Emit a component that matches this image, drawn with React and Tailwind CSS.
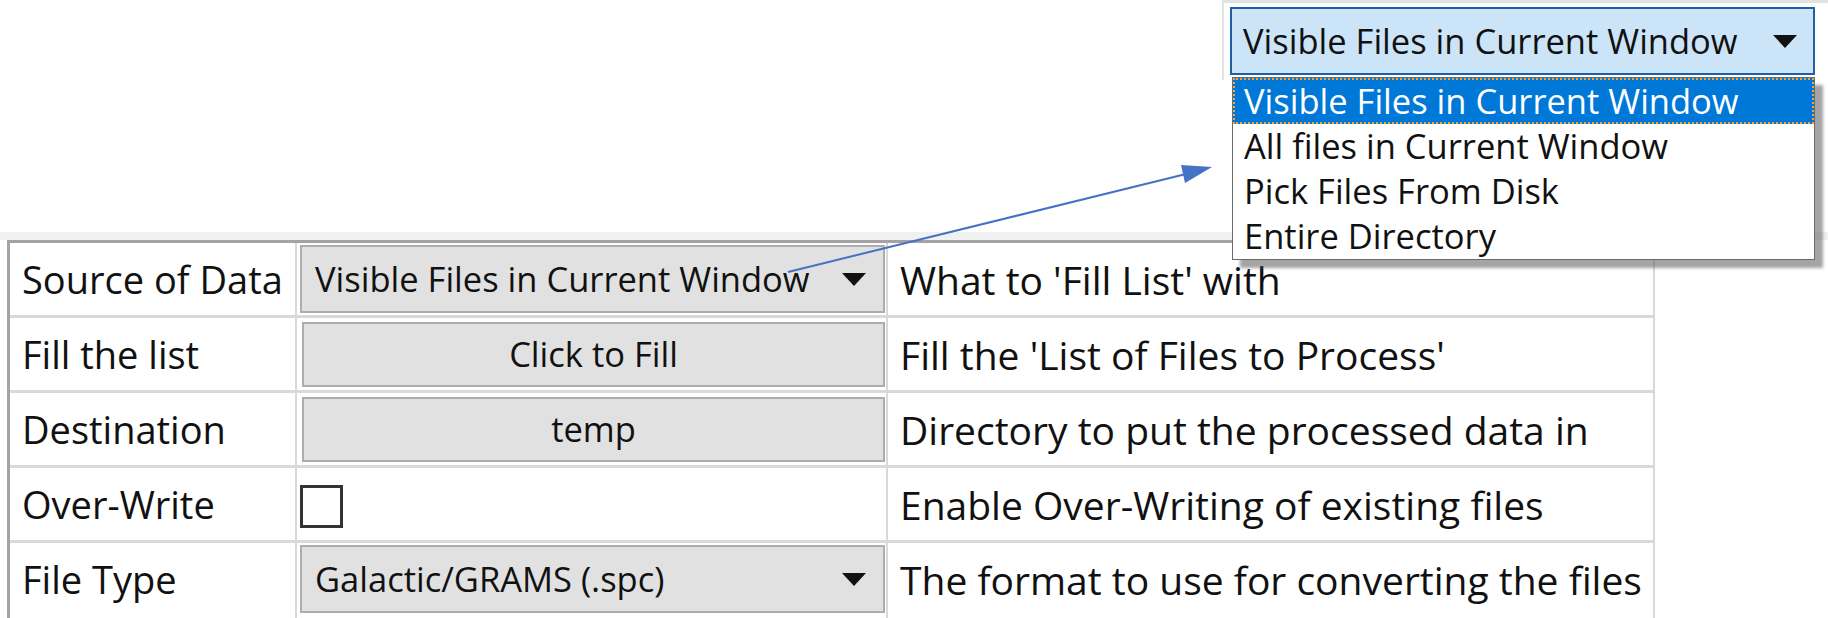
import { Fragment } from 'react'

// rows of the property grid
const ROWS = [
  { label: 'Source of Data', kind: 'select', value: 'Visible Files in Current Window', desc: "What to 'Fill List' with" },
  { label: 'Fill the list',  kind: 'button', value: 'Click to Fill', desc: "Fill the 'List of Files to Process'" },
  { label: 'Destination',    kind: 'button', value: 'temp', desc: 'Directory to put the processed data in' },
  { label: 'Over-Write',     kind: 'check', desc: 'Enable Over-Writing of existing files' },
  { label: 'File Type',      kind: 'select', value: 'Galactic/GRAMS (.spc)', desc: 'The format to use for converting the files' },
]

const OPTIONS = [
  'Visible Files in Current Window',
  'All files in Current Window',
  'Pick Files From Disk',
  'Entire Directory',
]

function Caret({ className = '' }) {
  return (
    <svg width="24" height="13" viewBox="0 0 24 13" className={className}>
      <polygon points="0,0 24,0 12,13" fill="#111" />
    </svg>
  )
}

function Control({ row }) {
  if (row.kind === 'select') {
    return (
      <div className="pl-[3px] pr-[1px] pt-[2px]">
        <div className="h-[68px] flex items-center justify-between bg-[#e1e1e1] border-2 border-[#adadad] pl-[13px] pr-[17px]">
          <span className="text-[34.5px] leading-none text-[#111]">{row.value}</span>
          <Caret />
        </div>
      </div>
    )
  }
  if (row.kind === 'button') {
    return (
      <div className="pl-[5px] pr-[1px] pt-[4px]">
        <div className="h-[65px] flex items-center justify-center bg-[#e1e1e1] border-2 border-[#adadad]">
          <span className="text-[34.5px] leading-none text-[#111]">{row.value}</span>
        </div>
      </div>
    )
  }
  return (
    <div className="pl-[3px] pt-[17px]">
      <div className="w-[43px] h-[43px] border-[3px] border-[#333] bg-white" />
    </div>
  )
}

function Popup() {
  return (
    <div className="absolute left-[1222px] top-0 w-[606px] h-[80px] border-l-2 border-t-[3px] border-[#e2e2e2]">
      <div className="absolute left-[6px] top-[4px] w-[585px]">
        <div className="h-[68px] flex items-center justify-between bg-[#cce4f7] border-2 border-[#1f5fa6] pl-[11px] pr-[16px]">
          <span className="text-[34.5px] leading-none text-[#111]">{OPTIONS[0]}</span>
          <Caret />
        </div>
        <div className="mt-[2px] ml-[2px] bg-white border border-[#6b6b6b] shadow-[8px_8px_3px_rgba(90,90,90,0.55)]">
          {OPTIONS.map((o, i) => (
            <div
              key={o}
              className={
                i === 0
                  ? 'h-[46px] flex items-center pl-[9px] bg-[#0078d7] text-white border-2 border-dotted border-[#f5a340]'
                  : 'h-[45px] flex items-center pl-[11px] text-[#111]'
              }
            >
              <span className="text-[34.5px] leading-none">{o}</span>
            </div>
          ))}
        </div>
      </div>
    </div>
  )
}

export default function App() {
  return (
    <div className="relative w-[1828px] h-[618px] overflow-hidden bg-white font-['Open_Sans','Liberation_Sans',sans-serif]">
      <div className="pt-[232px]">
        <div className="h-[8px] bg-[#f1f1f1]" />
        <div className="ml-[7px] w-[1650px] border-l-[3px] border-t-[3px] border-[#a3a3a3]">
          <div className="grid grid-cols-[287px_591px_767px]">
            {ROWS.map((row, i) => {
              // last row runs off the bottom of the shot, so no bottom rule
              const rule = i === ROWS.length - 1 ? 'h-[75px] pb-[3px]' : 'h-[75px] border-b-[3px]'
              return (
                <Fragment key={row.label}>
                  <div className={`${rule} border-r-2 border-[#d9d9d9] pl-[12px] flex items-center`}>
                    <span className="text-[38px] leading-none text-[#111]">{row.label}</span>
                  </div>
                  <div className={`${rule} border-r-2 border-[#d9d9d9]`}>
                    <Control row={row} />
                  </div>
                  <div className={`${rule} border-r-2 border-[#d9d9d9] pl-[12px] flex items-center`}>
                    <span className="text-[39px] leading-none text-[#111] whitespace-nowrap">{row.desc}</span>
                  </div>
                </Fragment>
              )
            })}
          </div>
        </div>
      </div>

      <Popup />

      {/* connector from the cell to the opened list */}
      <svg className="absolute inset-0 pointer-events-none" width="1828" height="618">
        <line x1="788" y1="272" x2="1186" y2="174" stroke="#4472c4" strokeWidth="2" />
        <polygon points="1212,167 1185,183 1181,165" fill="#4472c4" />
      </svg>
    </div>
  )
}
